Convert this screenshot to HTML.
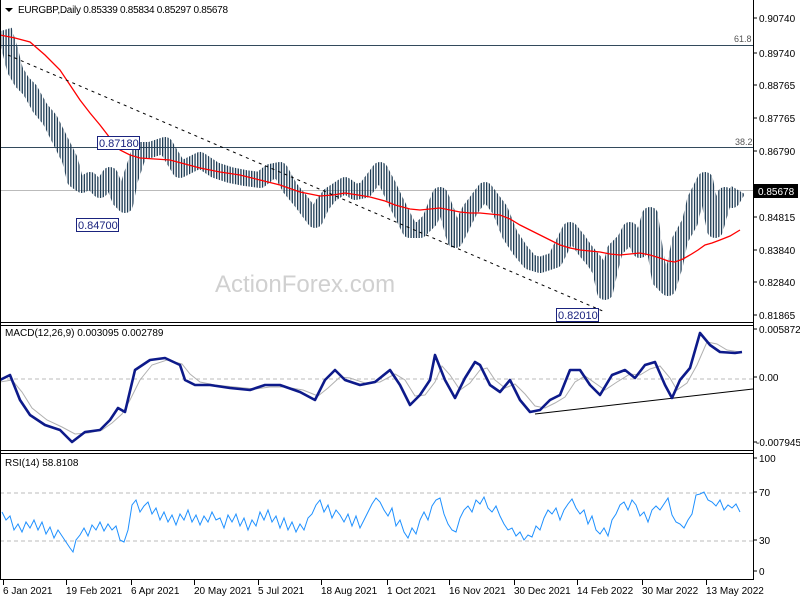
<!DOCTYPE html>
<html><head><meta charset="utf-8"><style>
body{margin:0;background:#fff;width:800px;height:600px;overflow:hidden}
svg{display:block}
text{font-family:"Liberation Sans",sans-serif;font-size:10px;fill:#000}
</style></head><body>
<svg width="800" height="600" xmlns="http://www.w3.org/2000/svg">
<defs>
<pattern id="pb" patternUnits="userSpaceOnUse" width="2.7" height="4"><rect x="0" y="0" width="1.3" height="4" fill="#1c3a52"/></pattern>
</defs>
<rect width="800" height="600" fill="#fff"/>
<polygon points="5,8 13,8 9,12" fill="#000"/>
<text x="18" y="13" textLength="210">EURGBP,Daily  0.85339 0.85834 0.85297 0.85678</text>
<line x1="0" y1="45.5" x2="753" y2="45.5" stroke="#334a5c"/>
<line x1="0" y1="147.5" x2="753" y2="147.5" stroke="#334a5c"/>
<text x="734" y="42" style="fill:#555;font-size:9px">61.8</text>
<text x="735" y="145" style="fill:#555;font-size:9px">38.2</text>
<line x1="0" y1="190.5" x2="753" y2="190.5" stroke="#bbb"/>
<text x="215" y="292" style="font-size:24px;fill:#d0d0d0">ActionForex.com</text>
<polyline fill="none" stroke="url(#pb)" stroke-width="16" stroke-linejoin="round" points="4,30 10,50 15,70 22,82 30,90 40,108 50,120 60,140 70,160 75,180 82,185 90,180 100,190 110,175 120,200 125,205 130,180 140,150 150,150 165,145 180,170 200,160 215,170 230,175 245,178 260,180 270,172 280,170 290,188 300,200 315,220 322,205 330,195 345,185 355,192 365,190 380,170 388,185 395,200 410,230 420,230 430,220 440,195 448,215 455,240 470,210 485,190 500,210 510,235 520,250 530,262 540,265 555,260 570,230 578,240 585,250 595,262 600,270 605,292 610,270 615,250 625,240 630,230 640,250 650,215 655,250 660,280 668,288 675,265 680,240 690,222 695,200 705,180 710,205 715,230 725,195 732,200 738,190"/>
<polyline fill="none" stroke="#f00" stroke-width="1.3" points="0,35 15,38 30,42 45,55 60,70 70,85 80,100 90,113 100,125 110,138 120,150 130,155 140,158 155,159 170,160 185,164 200,168 220,172 240,175 260,180 280,185 300,192 320,196 333,195 345,193 358,195 370,197 385,201 395,205 410,209 420,210 430,209 440,208 450,210 460,212 470,213 480,213 490,214 500,215 510,219 520,225 530,230 540,235 550,240 560,245 570,248 580,250 590,251 600,252 610,254 620,255 630,254 640,253 650,255 660,258 668,261 675,262 683,259 690,255 698,250 705,245 712,243 720,240 730,236 740,230"/>
<line x1="8" y1="55" x2="605" y2="312" stroke="#000" stroke-dasharray="3,4"/>
<rect x="97.5" y="136.5" width="42" height="13" fill="#fff" stroke="#1a237e"/>
<text x="99" y="147" style="fill:#1a237e;font-size:11px">0.87180</text>
<rect x="76.5" y="218.5" width="42" height="13" fill="#fff" stroke="#1a237e"/>
<text x="78" y="229" style="fill:#1a237e;font-size:11px">0.84700</text>
<rect x="556.5" y="308.5" width="42" height="13" fill="#fff" stroke="#1a237e"/>
<text x="558" y="319" style="fill:#1a237e;font-size:11px">0.82010</text>

<text x="5" y="336">MACD(12,26,9) 0.003095 0.002789</text>
<line x1="0" y1="379" x2="753" y2="379" stroke="#bbb" stroke-dasharray="4,3"/>
<line x1="535" y1="414" x2="753" y2="389" stroke="#000"/>
<polyline fill="none" stroke="#b0b0b0" stroke-width="1" points="0,382 12,380 22,392 32,408 47,420 62,427 75,434 88,433 102,430 112,423 122,414 130,400 140,380 152,365 167,360 182,364 190,374 200,382 215,385 235,387 255,389 270,387 285,387 303,390 318,396 328,388 340,377 350,378 365,383 380,382 395,374 405,380 415,396 425,395 435,382 442,366 450,375 460,390 470,383 480,370 487,368 495,380 505,388 515,384 525,394 535,406 545,408 555,403 565,397 575,382 585,376 595,383 605,390 617,382 630,374 640,375 650,369 660,366 670,378 677,390 687,383 697,365 707,342 717,344 727,350 740,352"/>
<polyline fill="none" stroke="#0d1a8a" stroke-width="2.6" stroke-linejoin="round" points="0,380 10,375 20,400 30,415 45,425 60,430 72,442 85,432 100,430 110,420 118,408 125,412 135,370 150,360 165,358 180,365 185,380 195,385 210,385 230,388 250,390 265,385 280,385 300,392 315,400 325,380 335,370 345,380 360,385 375,382 390,370 400,385 410,405 420,395 430,380 435,355 445,380 455,398 465,378 475,362 480,365 490,385 500,392 510,380 520,400 530,412 540,410 550,400 560,395 570,370 580,370 590,385 600,395 612,375 625,370 635,378 645,365 655,362 665,385 672,398 680,380 690,368 700,333 710,345 720,352 735,353 742,352"/>

<text x="5" y="466">RSI(14) 58.8108</text>
<line x1="0" y1="493" x2="753" y2="493" stroke="#bbb" stroke-dasharray="4,3"/>
<line x1="0" y1="541" x2="753" y2="541" stroke="#bbb" stroke-dasharray="4,3"/>
<polyline fill="none" stroke="#1e90ff" stroke-width="1" points="2,512 6,520 10,516 14,530 18,524 22,532 26,522 30,528 34,520 38,530 42,522 46,534 50,527 54,538 58,530 62,536 66,542 70,548 73,552 76,540 80,535 84,528 88,536 92,525 96,530 100,522 104,531 108,524 112,530 116,526 120,540 124,542 128,530 132,505 136,500 140,512 144,506 148,502 152,514 156,508 160,520 164,512 168,522 172,515 176,525 180,514 184,520 188,510 192,522 196,515 200,525 204,516 208,522 212,512 216,520 220,518 224,528 228,515 232,522 236,514 240,526 244,518 248,530 252,520 256,526 260,512 264,520 268,510 272,522 276,516 280,528 284,518 288,530 292,522 296,532 300,524 304,530 308,518 312,514 316,505 320,500 324,512 328,505 332,518 336,510 340,515 344,522 348,514 352,526 356,516 360,528 364,520 368,512 372,504 376,498 380,502 384,510 388,516 392,508 396,526 400,520 404,532 408,538 412,528 416,534 420,520 424,512 428,520 432,506 436,500 440,498 444,514 448,524 452,530 456,532 460,518 464,510 468,506 472,512 476,500 480,504 484,497 488,508 492,512 496,506 500,516 504,524 508,530 512,528 516,536 520,532 524,540 528,535 532,537 536,526 540,530 544,518 548,510 552,514 556,508 560,520 564,510 568,504 572,499 576,508 580,514 584,510 588,524 592,516 596,530 600,534 604,528 608,536 612,520 616,514 620,505 624,502 628,510 632,500 636,505 640,516 644,512 648,522 652,510 656,506 660,510 664,504 668,498 672,515 676,522 680,524 684,528 688,520 692,514 696,495 700,494 704,492 708,500 712,502 716,506 720,500 724,510 728,505 732,508 736,504 740,512"/>

<line x1="0.5" y1="0" x2="0.5" y2="580" stroke="#000"/>
<line x1="753.5" y1="0" x2="753.5" y2="580" stroke="#000"/>
<line x1="0" y1="322.5" x2="754" y2="322.5" stroke="#000"/>
<line x1="0" y1="325.5" x2="754" y2="325.5" stroke="#000"/>
<line x1="0" y1="450.5" x2="754" y2="450.5" stroke="#000"/>
<line x1="0" y1="453.5" x2="754" y2="453.5" stroke="#000"/>
<line x1="0" y1="579.5" x2="754" y2="579.5" stroke="#000"/>

<g stroke="#000">
<line x1="753" y1="18" x2="757" y2="18"/><line x1="753" y1="53" x2="757" y2="53"/><line x1="753" y1="85" x2="757" y2="85"/><line x1="753" y1="118" x2="757" y2="118"/><line x1="753" y1="151" x2="757" y2="151"/><line x1="753" y1="217" x2="757" y2="217"/><line x1="753" y1="250" x2="757" y2="250"/><line x1="753" y1="282" x2="757" y2="282"/><line x1="753" y1="315" x2="757" y2="315"/><line x1="753" y1="329" x2="757" y2="329"/><line x1="753" y1="377" x2="757" y2="377"/><line x1="753" y1="442" x2="757" y2="442"/><line x1="753" y1="458" x2="757" y2="458"/><line x1="753" y1="492" x2="757" y2="492"/><line x1="753" y1="540" x2="757" y2="540"/><line x1="753" y1="571" x2="757" y2="571"/>
</g>
<text x="759" y="22">0.90740</text>
<text x="759" y="57">0.89740</text>
<text x="759" y="89">0.88765</text>
<text x="759" y="122">0.87765</text>
<text x="759" y="155">0.86790</text>
<text x="759" y="221">0.84815</text>
<text x="759" y="254">0.83840</text>
<text x="759" y="286">0.82840</text>
<text x="759" y="319">0.81865</text>
<text x="759" y="333">0.005872</text>
<text x="759" y="381">0.00</text>
<text x="756" y="446">-0.007945</text>
<text x="759" y="462">100</text>
<text x="759" y="496">70</text>
<text x="759" y="544">30</text>
<text x="759" y="575">0</text>
<rect x="754" y="184" width="44" height="14" fill="#000"/>
<text x="758" y="195" style="fill:#fff">0.85678</text>

<g stroke="#000">
<line x1="3.5" y1="580" x2="3.5" y2="585"/><line x1="66.5" y1="580" x2="66.5" y2="585"/><line x1="131.5" y1="580" x2="131.5" y2="585"/><line x1="194.5" y1="580" x2="194.5" y2="585"/><line x1="258.5" y1="580" x2="258.5" y2="585"/><line x1="321.5" y1="580" x2="321.5" y2="585"/><line x1="387.5" y1="580" x2="387.5" y2="585"/><line x1="449.5" y1="580" x2="449.5" y2="585"/><line x1="514.5" y1="580" x2="514.5" y2="585"/><line x1="577.5" y1="580" x2="577.5" y2="585"/><line x1="642.5" y1="580" x2="642.5" y2="585"/><line x1="706.5" y1="580" x2="706.5" y2="585"/>
</g>
<text x="3" y="594">6 Jan 2021</text>
<text x="66" y="594">19 Feb 2021</text>
<text x="131" y="594">6 Apr 2021</text>
<text x="194" y="594">20 May 2021</text>
<text x="258" y="594">5 Jul 2021</text>
<text x="321" y="594">18 Aug 2021</text>
<text x="387" y="594">1 Oct 2021</text>
<text x="449" y="594">16 Nov 2021</text>
<text x="514" y="594">30 Dec 2021</text>
<text x="577" y="594">14 Feb 2022</text>
<text x="642" y="594">30 Mar 2022</text>
<text x="706" y="594">13 May 2022</text>
</svg>
</body></html>
